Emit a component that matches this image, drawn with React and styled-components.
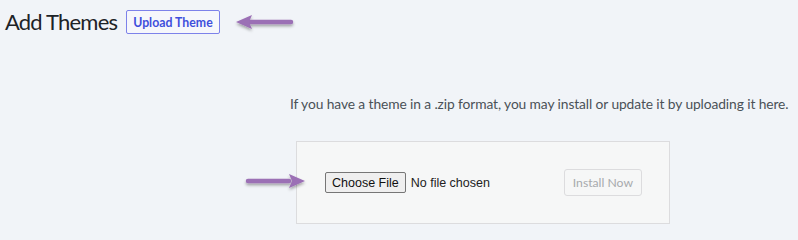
import React from 'react'
import styled, { createGlobalStyle } from 'styled-components'

const Global = createGlobalStyle`
  html, body {
    margin: 0;
    padding: 0;
    background: #f1f4f8;
  }
  body {
    font-family: Lato, "Noto Sans", sans-serif;
    color: #3c434a;
  }
`

const Page = styled.div`
  position: relative;
  width: 798px;
  height: 240px;
  overflow: hidden;
`

const Header = styled.div`
  display: flex;
  align-items: center;
  gap: 9px;
  padding: 9px 0 0 5px;
`

const Title = styled.h1`
  margin: 0;
  font-size: 22px;
  font-weight: 400;
  letter-spacing: -0.8px;
  line-height: 26px;
  color: #1d2327;
`

const ActionButton = styled.a`
  display: inline-flex;
  align-items: center;
  height: 22px;
  padding: 0 6px;
  border: 1px solid #7d82ea;
  border-radius: 2px;
  background: #f6f7fb;
  color: #3f4fdc;
  font-size: 12.3px;
  font-weight: 700;
  text-decoration: none;
`

const Note = styled.p`
  margin: 58px 0 0 290px;
  font-size: 13.8px;
  letter-spacing: -0.1px;
  line-height: 22px;
  color: #4a5157;
  white-space: nowrap;
`

const Panel = styled.form`
  display: flex;
  align-items: center;
  box-sizing: border-box;
  width: 374px;
  height: 83px;
  margin: 26px 0 0 296px;
  padding: 0 27px 0 28px;
  background: #f6f7f7;
  border: 1px solid #dcdcde;
`

const ChooseButton = styled.span`
  display: inline-flex;
  align-items: center;
  box-sizing: border-box;
  height: 21px;
  padding: 0 6px;
  background: #efefef;
  border: 1px solid #767676;
  border-radius: 2px;
  font-family: "Liberation Sans", Arial, sans-serif;
  font-size: 12.5px;
  color: #111;
`

const FileName = styled.span`
  margin-left: 5px;
  font-family: "Liberation Sans", Arial, sans-serif;
  font-size: 12.5px;
  color: #222;
`

const InstallButton = styled.span`
  margin-left: auto;
  display: inline-flex;
  align-items: center;
  box-sizing: border-box;
  height: 27px;
  padding: 0 8px;
  border: 1px solid #dcdcde;
  border-radius: 3px;
  background: #f6f7f7;
  color: #a7aaad;
  font-size: 12.2px;
`

const Arrow = styled.svg`
  display: block;
  flex: none;
  overflow: visible;
`

const FloatingArrow = styled(Arrow)`
  position: absolute;
  left: 246px;
  top: 170px;
`

function ArrowShape({ dir }) {
  const shaft = dir === 'left' ? 'M15 11 H56' : 'M2 11 H43'
  const head = dir === 'left' ? 'M1 11 L17 4 L14 11 L17 18 Z' : 'M59 11 L43 4 L46 11 L43 18 Z'
  return (
    <>
      <defs>
        <filter id={'sh' + dir} x="-20%" y="-50%" width="140%" height="200%">
          <feDropShadow dx="0" dy="2" stdDeviation="1.6" floodColor="#000" floodOpacity="0.35" />
        </filter>
      </defs>
      <g filter={`url(#sh${dir})`}>
        <path d={shaft} stroke="#9b6fb5" strokeWidth="4.5" strokeLinecap="round" />
        <path d={head} fill="#9b6fb5" />
      </g>
    </>
  )
}

export default function App() {
  return (
    <Page>
      <Global />
      <Header>
        <Title>Add Themes</Title>
        <ActionButton href="#">Upload Theme</ActionButton>
        <Arrow width="60" height="22" viewBox="0 0 60 22" style={{ marginLeft: 6 }}>
          <ArrowShape dir="left" />
        </Arrow>
      </Header>
      <Note>If you have a theme in a .zip format, you may install or update it by uploading it here.</Note>
      <Panel>
        <ChooseButton>Choose File</ChooseButton>
        <FileName>No file chosen</FileName>
        <InstallButton>Install Now</InstallButton>
      </Panel>
      <FloatingArrow width="60" height="22" viewBox="0 0 60 22">
        <ArrowShape dir="right" />
      </FloatingArrow>
    </Page>
  )
}
